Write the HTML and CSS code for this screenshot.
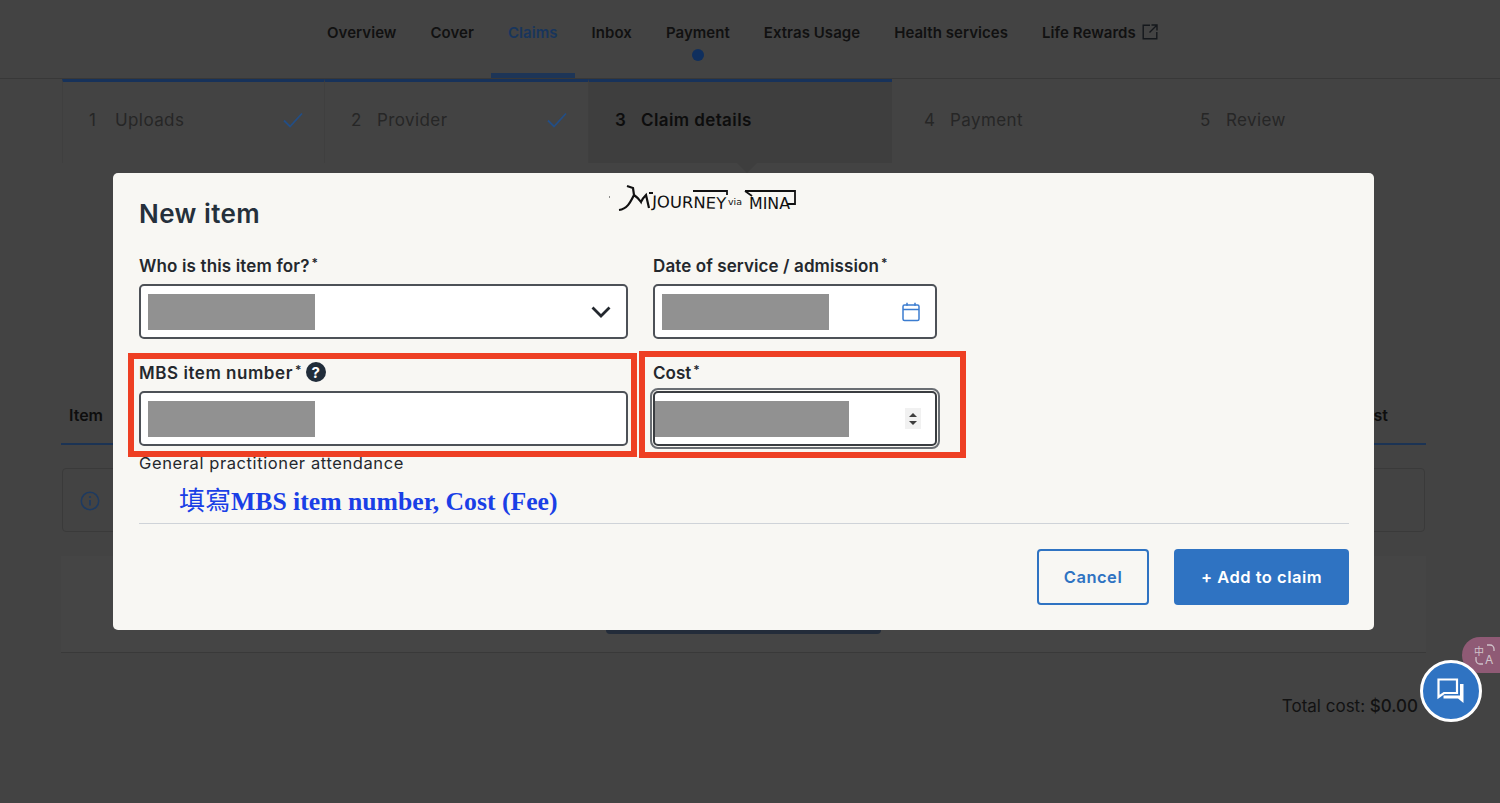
FILE: index.html
```html
<!DOCTYPE html>
<html lang="en">
<head>
<meta charset="utf-8">
<title>New item</title>
<link rel="stylesheet" href="styles.css">
</head>
<body>
<div class="page">
  <header class="topnav">
    <a class="tab">Overview</a>
    <a class="tab">Cover</a>
    <a class="tab tab-active">Claims</a>
    <a class="tab">Inbox</a>
    <a class="tab tab-dot">Payment</a>
    <a class="tab">Extras Usage</a>
    <a class="tab">Health services</a>
    <a class="tab">Life Rewards
      <svg class="ext" viewBox="0 0 16 16" width="16" height="16"><path d="M8 1.2H1.2v13.6h13.6V8M9.5 1h5.5v5.500M15 1 7.500 8.500" fill="none" stroke="#15181c" stroke-width="1.400"/></svg>
    </a>
  </header>
  <nav class="stepper">
    <div class="step step-1 step-on"><span class="num">1</span><span class="name">Uploads</span>
      <svg class="chk" viewBox="0 0 20 16" width="20" height="16"><path d="M1 8.500 7 14.500 19 1.500" fill="none" stroke="#234e85" stroke-width="1.800"/></svg></div>
    <div class="step step-2 step-on"><span class="num">2</span><span class="name">Provider</span>
      <svg class="chk" viewBox="0 0 20 16" width="20" height="16"><path d="M1 8.500 7 14.500 19 1.500" fill="none" stroke="#234e85" stroke-width="1.800"/></svg></div>
    <div class="step step-3 step-on step-current"><span class="num">3</span><span class="name">Claim details</span></div>
    <div class="step step-4"><span class="num">4</span><span class="name">Payment</span></div>
    <div class="step step-5"><span class="num">5</span><span class="name">Review</span></div>
  </nav>
  <main class="content">
    <div class="tablehead"><span>Item</span><span>Cost</span></div>
    <div class="infobox">
      <svg viewBox="0 0 20 20" width="20" height="20"><circle cx="10" cy="10" r="8.700" fill="none" stroke="#1d3a61" stroke-width="1.500"/><circle cx="10" cy="6" r="1.100" fill="#1d3a61"/><path d="M10 9v5.500" stroke="#1d3a61" stroke-width="1.700"/></svg>
    </div>
    <div class="panel"><div class="panelbtn"></div></div>
    <div class="total">Total cost: <span class="total-val">$0.00</span></div>
  </main>
</div>

<div class="translate">
  <svg viewBox="0 0 24 24" width="24" height="24">
    <text class="tr-zh" x="1" y="12">中</text>
    <text class="tr-en" x="12" y="21">A</text>
    <path d="M14 2h3a4 4 0 0 1 4 4v2M3 14v3a4 4 0 0 0 4 4h3" fill="none" stroke="#cfc3ca" stroke-width="1.300"/>
  </svg>
</div>
<button class="chat" aria-label="Chat">
  <svg viewBox="0 0 30 28" width="30" height="28"><path d="M2.500 2.500h18.500v13.500H8l-5.500 4z" fill="none" stroke="#fff" stroke-width="2.200" stroke-linejoin="miter"/><path d="M24 7h3.500v19l-5.500-4.500H7.500V18.500H24z" fill="#fff"/></svg>
</button>

<div class="overlay">
  <section class="modal">
    <div class="logo">
      <svg viewBox="0 0 190 34" width="190" height="34">
        <path d="M1 15h1" stroke="#222" stroke-width="1"/>
        <path d="M11 28c8-1 11-7 15-15M19 4l6 2 1 7c3 2 5 4 7 7 1-3 3-5 5-7l3 13" fill="none" stroke="#111" stroke-width="2.200"/>
        <path d="M41 11h4M85 9h34v4M137 9l7 5M137 9h50v13h-8" fill="none" stroke="#111" stroke-width="1.800"/>
        <text class="logo-a" x="44" y="25" textLength="74" lengthAdjust="spacingAndGlyphs" transform="rotate(1.500 44 25)">JOURNEY</text>
        <text class="logo-b" x="120" y="23" textLength="14" lengthAdjust="spacingAndGlyphs">via</text>
        <text class="logo-a" x="141" y="27" textLength="41" lengthAdjust="spacingAndGlyphs">MINA</text>
      </svg>
    </div>
    <h1 class="title">New item</h1>
    <div class="formgrid">
      <div class="field">
        <label class="lab lab-who">Who is this item for?<sup>*</sup></label>
        <div class="box"><i class="mask"></i>
          <svg class="chev" viewBox="0 0 20 12" width="20" height="12"><path d="M1.500 1.500 10 10l8.500-8.500" fill="none" stroke="#23282e" stroke-width="2.800"/></svg>
        </div>
      </div>
      <div class="field">
        <label class="lab lab-date">Date of service / admission<sup>*</sup></label>
        <div class="box"><i class="mask"></i>
          <svg class="cal" viewBox="0 0 18 20" width="18" height="20"><rect x="1" y="3" width="16" height="15.500" rx="1.500" fill="none" stroke="#3b7cd0" stroke-width="1.500"/><path d="M1 7.500h16M5 .8v3M13 .8v3" stroke="#3b7cd0" stroke-width="1.500" fill="none"/></svg>
        </div>
      </div>
      <div class="field">
        <span class="red red-mbs"></span>
        <label class="lab lab-mbs">MBS item number<sup>*</sup>
          <svg class="help" viewBox="0 0 20 20" width="20" height="20"><circle cx="10" cy="10" r="10" fill="#212d3a"/><text class="help-q" x="10" y="15.500" text-anchor="middle">?</text></svg>
        </label>
        <div class="box"><i class="mask"></i></div>
        <p class="hint">General practitioner attendance</p>
        <p class="note"><span class="note-cjk">填寫</span>MBS item number, Cost (Fee)</p>
      </div>
      <div class="field">
        <span class="red red-cost"></span>
        <label class="lab lab-cost">Cost<sup>*</sup></label>
        <div class="box box-focus"><i class="mask mask-cost"></i>
          <span class="spin"><i class="up"></i><i class="down"></i></span>
        </div>
      </div>
    </div>
    <hr class="rule">
    <div class="actions">
      <button class="btn btn-ghost">Cancel</button>
      <button class="btn btn-solid">+ Add to claim</button>
    </div>
  </section>
  <i class="pointer"></i>
</div>
</body>
</html>
```
FILE: styles.css
```css
* { box-sizing: border-box; }
html, body { margin: 0; height: 100%; }
body { background: #434343; font-family: Inter, "Open Sans", sans-serif; color: #121212; overflow: hidden; position: relative; }

.topnav { height: 79px; display: flex; padding-left: 310px; border-bottom: 1px solid #383838; }
.tab { position: relative; height: 78px; padding: 24px 17px 0; font-size: 15px; font-weight: 600; line-height: 18px; color: #111; white-space: nowrap; letter-spacing: .05px; }
.tab-active { color: #18355c; border-bottom: 5px solid #1d3557; }
.tab-dot::after { content: ""; position: absolute; left: 50%; top: 49px; width: 12px; height: 12px; margin-left: -6px; border-radius: 50%; background: #0f2f5e; }
.ext { vertical-align: -2px; margin-left: 2px; }

.stepper { display: flex; margin: 0 74px 0 62px; height: 84px; }
.step { display: flex; align-items: center; height: 84px; padding: 0 21px 6px 26px; border-top: 3px solid transparent; font-size: 17px; color: #262626; letter-spacing: .4px; }
.step-on { border-top-color: #17325a; border-left: 1px solid #3f3f3f; }
.step-1 { width: 262px; }
.step-2 { width: 264px; }
.step-3 { width: 304px; background: #3e3e3e; color: #0d0d0d; font-weight: 600; }
.step-4 { width: 276px; padding-left: 32px; }
.step-5 { width: 258px; padding-left: 32px; }
.num { width: 26px; }
.name { flex: 1; white-space: nowrap; }

.content { padding: 225px 74px 0 61px; }
.tablehead { height: 57px; padding: 17px 38px 0 8px; display: flex; justify-content: space-between; border-bottom: 2px solid #1b3354; font-size: 16px; font-weight: 600; color: #0e0e0e; line-height: 20px; }
.infobox { margin: 23px 1px 0; height: 64px; border: 1px solid #3a3a3a; border-radius: 4px; padding: 22px 17px 0; }
.infobox svg { display: block; }
.panel { position: relative; height: 97px; margin-top: 24px; border-bottom: 1px solid #393939; background: #454545; }
.panelbtn { position: absolute; left: 545px; bottom: 18px; width: 275px; height: 6px; background: #232c3a; border-radius: 0 0 4px 4px; }
.total { margin-top: 42px; padding-right: 8px; text-align: right; font-size: 17px; line-height: 22px; color: #121212; }
.total-val { font-weight: 500; }

.translate { position: absolute; right: 0; top: 637px; width: 38px; height: 36px; border-radius: 18px 0 0 18px; background: #8f5a75; padding: 6px 0 0 11px; }
.translate svg { display: block; overflow: visible; }
.tr-zh { font-family: "Noto Sans CJK SC", sans-serif; font-size: 10px; fill: #cfc3ca; }
.tr-en { font-family: Inter, sans-serif; font-size: 12px; fill: #cfc3ca; }
.chat { position: absolute; left: 1420px; top: 660px; width: 62px; height: 62px; border-radius: 50%; background: #2f73c2; border: 3px solid #fff; padding: 0; display: flex; align-items: center; justify-content: center; }

.overlay { position: absolute; inset: 0; padding: 173px 126px 0 113px; }
.pointer { position: absolute; left: 737px; top: 163px; border: 10px solid transparent; border-top: 0; border-bottom-color: #3e3e3e; transform: scaleY(-1); }
.modal { position: relative; height: 457px; padding: 26px 25px 25px 26px; border-radius: 5px; background: #f8f7f3; color: #24282d; }
.logo { position: absolute; left: 495px; top: 9px; width: 190px; height: 34px; }
.logo svg { display: block; }
.logo-a { font-family: "DejaVu Sans", sans-serif; font-size: 16px; fill: #111; }
.logo-b { font-family: "DejaVu Sans", sans-serif; font-size: 8px; fill: #111; }
.title { margin: 0; height: 30px; font-size: 26px; line-height: 30px; font-weight: 600; color: #25303b; letter-spacing: .45px; }

.formgrid { display: grid; grid-template-columns: 489px 284px; column-gap: 25px; row-gap: 22px; margin-top: 25px; }
.field { position: relative; }
.lab { display: block; height: 30px; font-size: 17px; line-height: 24px; font-weight: 600; color: #24282d; white-space: nowrap; }
.lab-who { letter-spacing: .15px; }
.lab-date { letter-spacing: .1px; }
.lab-mbs { letter-spacing: .55px; }
.lab sup { font-size: 12px; line-height: 0; margin-left: 2px; vertical-align: 5px; letter-spacing: 0; }
.help { vertical-align: -3px; margin-left: 0; }
.help-q { font-family: Inter, sans-serif; font-size: 15px; font-weight: 700; fill: #fff; }
.box { position: relative; height: 55px; border: 2px solid #4d5157; border-radius: 5px; background: #fff; padding: 7px; display: flex; align-items: center; justify-content: space-between; }
.box-focus { outline: 2px solid #6a6e73; outline-offset: 1px; border-color: #3a3d41; padding-left: 0; }
.mask { display: block; width: 167px; height: 36px; background: #919191; }
.mask-cost { width: 194px; }
.chev { margin-right: 8px; }
.cal { margin-right: 8px; }
.spin { width: 16px; height: 21px; margin-right: 7px; background: #f1f1f1; display: flex; flex-direction: column; align-items: center; justify-content: center; gap: 4px; }
.up { border: 4px solid transparent; border-top: 0; border-bottom: 4px solid #3d3d3d; }
.down { border: 4px solid transparent; border-bottom: 0; border-top: 4px solid #3d3d3d; }
.hint { margin: 8px 0 0; font-size: 16.500px; line-height: 18px; color: #24282d; letter-spacing: .6px; white-space: nowrap; }
.note { position: absolute; left: 40px; top: 123px; margin: 0; font-family: "Liberation Serif", "Noto Sans CJK TC", serif; font-size: 25.700px; line-height: 30px; font-weight: 700; color: #1a3fe6; white-space: nowrap; }
.note-cjk { font-family: "Noto Sans CJK TC", sans-serif; font-weight: 400; font-size: 26px; }
.red { position: absolute; border: 6px solid #ee3f23; pointer-events: none; }
.red-mbs { left: -11px; top: -8px; width: 509px; height: 104px; }
.red-cost { left: -14px; top: -10px; width: 327px; height: 107px; }

.rule { margin: 51px 0 0; border: 0; height: 1px; background: #cfd3d8; }
.actions { display: flex; justify-content: flex-end; gap: 25px; margin-top: 25px; }
.btn { height: 56px; border-radius: 4px; font: 600 16.500px/20px Inter, sans-serif; letter-spacing: .5px; padding: 0; }
.btn-ghost { width: 112px; background: transparent; border: 2px solid #2f73c2; color: #2f73c2; }
.btn-solid { width: 175px; background: #2f73c2; border: 0; color: #fff; }
```
